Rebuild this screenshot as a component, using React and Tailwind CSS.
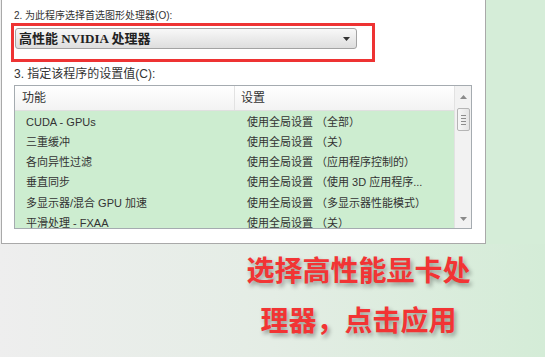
import React from 'react';

const rows = [
  ['CUDA - GPUs', '使用全局设置 （全部）'],
  ['三重缓冲', '使用全局设置 （关）'],
  ['各向异性过滤', '使用全局设置 （应用程序控制的）'],
  ['垂直同步', '使用全局设置 （使用 3D 应用程序...'],
  ['多显示器/混合 GPU 加速', '使用全局设置 （多显示器性能模式）'],
  ['平滑处理 - FXAA', '使用全局设置 （关）'],
];

const font = { fontFamily: '"Liberation Sans", "Noto Sans CJK SC", sans-serif' };

const Scrollbar = () => (
  <div className="absolute right-0 top-0 bottom-0 w-[17px] bg-[#f2f2f2] border-l border-[#e2e2e2] flex flex-col items-center">
    <div className="h-[20px] flex items-center justify-center mt-[1px]">
      <svg width="7" height="4" viewBox="0 0 7 4"><path d="M0 4 L3.5 0 L7 4 Z" fill="#8a8a8a" /></svg>
    </div>
    <div className="w-[13px] h-[23px] mt-[1px] rounded-[2px] border border-[#b5b5b5] bg-gradient-to-r from-[#f7f7f7] to-[#e4e4e4] flex flex-col items-center justify-center gap-[2px]">
      <div className="w-[5px] h-px bg-[#8c8c8c]" />
      <div className="w-[5px] h-px bg-[#8c8c8c]" />
      <div className="w-[5px] h-px bg-[#8c8c8c]" />
      <div className="w-[5px] h-px bg-[#8c8c8c]" />
    </div>
    <div className="flex-1" />
    <div className="h-[18px] flex items-center justify-center">
      <svg width="7" height="4" viewBox="0 0 7 4"><path d="M0 0 L7 0 L3.5 4 Z" fill="#8a8a8a" /></svg>
    </div>
  </div>
);

export default function App() {
  return (
    <div
      className="w-[545px] h-[357px] overflow-hidden bg-gradient-to-r from-[#eeeeee] via-[#e4ede5] to-[#d4ecd7]"
      style={font}
    >
      <div className="flex h-[244px]">
        <div className="w-[485px] h-[244px] bg-white border-l border-b border-r border-[#a9a9a9] ml-[1px] pt-[9px] text-[#333] text-[12px]">
          <div className="pl-[12px] leading-[14px] text-[10px]">2. 为此程序选择首选图形处理器(O):</div>
          <div className="ml-[9px] mt-[0px] w-[364px] h-[39px] border-[3px] border-[#ee3333] pl-[1px] pt-[2px]">
            <div className="w-[342px] h-[21px] rounded-[3px] border border-[#a3a3a3] bg-gradient-to-b from-[#f8f8f8] to-[#dedede] flex items-center pl-[3px] pr-[6px]">
              <span className="font-bold text-[13px] text-[#222] flex-1" style={{ fontFamily: '"Liberation Serif", "Noto Sans CJK SC", serif' }}>高性能 NVIDIA 处理器</span>
              <svg width="7" height="4" viewBox="0 0 7 4"><path d="M0 0 L7 0 L3.5 4 Z" fill="#333" /></svg>
            </div>
          </div>
          <div className="pl-[12px] mt-[5px] leading-[14px]">3. 指定该程序的设置值(C):</div>
          <div className="relative ml-[12px] mt-[4px] w-[458px] h-[144px] border border-[#a5abb0] overflow-hidden">
            <div className="flex h-[25px] bg-gradient-to-b from-white to-[#f3f3f3] border-b border-[#e0e0e0] text-[12px] text-[#333] pr-[17px]">
              <div className="w-[220px] pl-[7px] flex items-center border-r border-[#e2e2e2]">功能</div>
              <div className="flex-1 pl-[6px] flex items-center">设置</div>
            </div>
            <div className="bg-[#cdedd0] h-full pr-[17px] text-[11px] text-[#333] pt-[1px]">
              {rows.map(([a, b], i) => (
                <div key={i} className="flex h-[20.2px] items-center">
                  <div className="w-[220px] pl-[11px]">{a}</div>
                  <div className="flex-1 pl-[12px] whitespace-nowrap">{b}</div>
                </div>
              ))}
            </div>
            <Scrollbar />
          </div>
        </div>
        <div className="flex-1 bg-[#d5edd8]" />
      </div>
      <div
        className="flex flex-col items-center w-[545px] pl-[172px] text-[28px] font-bold text-[#f23434] leading-[50px]"
        style={{ fontFamily: '"Noto Sans CJK SC", sans-serif', textShadow: '2px 3px 4px rgba(0,0,0,0.35)' }}
      >
        <div>选择高性能显卡处</div>
        <div>理器，点击应用</div>
      </div>
    </div>
  );
}
